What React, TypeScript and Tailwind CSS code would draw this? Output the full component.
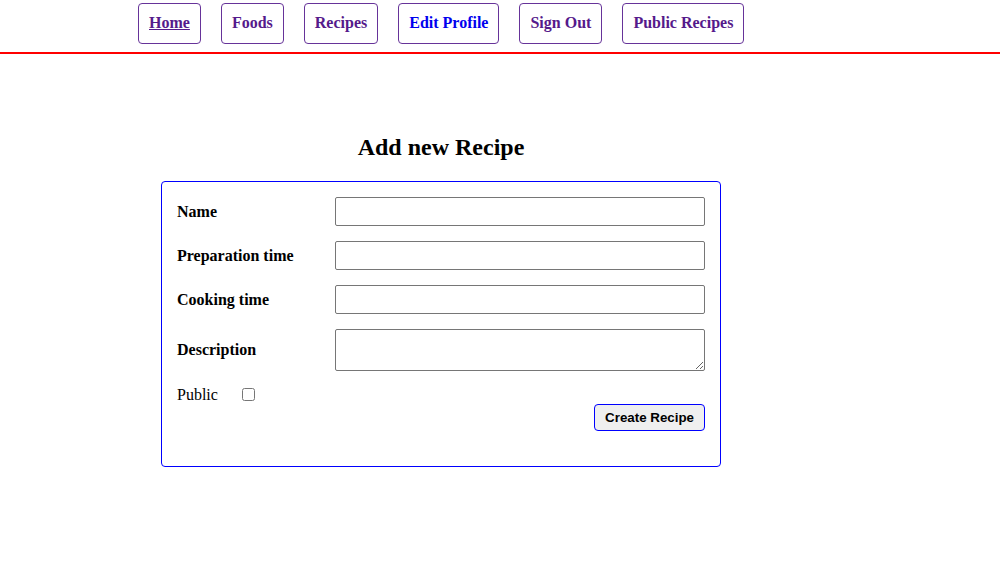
import React from 'react';

const links = [
  { label: 'Home', active: true, color: 'text-[#551a8b]' },
  { label: 'Foods', active: false, color: 'text-[#551a8b]' },
  { label: 'Recipes', active: false, color: 'text-[#551a8b]' },
  { label: 'Edit Profile', active: false, color: 'text-[#0000ee]' },
  { label: 'Sign Out', active: false, color: 'text-[#551a8b]' },
  { label: 'Public Recipes', active: false, color: 'text-[#551a8b]' },
];

const fields = [
  { label: 'Name', textarea: false },
  { label: 'Preparation time', textarea: false },
  { label: 'Cooking time', textarea: false },
  { label: 'Description', textarea: true },
];

export default function App() {
  return (
    <div className="min-h-[582px] bg-white text-black font-['Liberation_Serif',serif] text-[16px]">
      {/* nav */}
      <nav className="border-b-2 border-[#ff0000] pt-[3px] pb-[8px]">
        <ul className="flex gap-[20px] pl-[138px]">
          {links.map((l) => (
            <li key={l.label}>
              <a
                href="#"
                className={`flex h-[41px] items-center px-[10px] pb-[2px] border border-[#663399] rounded-[4px] font-bold ${l.color} ${l.active ? 'underline' : 'no-underline'}`}
              >
                {l.label}
              </a>
            </li>
          ))}
        </ul>
      </nav>

      <div className="ml-[161px] w-[560px]">
        <h2 className="mt-[79px] mb-[20px] text-center text-[24px] font-bold leading-[28px]">Add new Recipe</h2>

        <form className="border border-[#0000ff] rounded-[4px] px-[15px] pt-[15px] pb-[15px]" onSubmit={(e) => e.preventDefault()}>
          <div className="flex flex-col gap-[15px]">
            {fields.map((f) => (
              <div key={f.label} className="grid grid-cols-[158px_370px] items-center">
                <label className="font-bold">{f.label}</label>
                {f.textarea ? (
                  <textarea className="h-[42px] border border-[#767676] rounded-[2px] bg-white" />
                ) : (
                  <input type="text" className="h-[29px] border border-[#767676] rounded-[2px] bg-white" />
                )}
              </div>
            ))}
          </div>

          <div className="flex items-center h-[18px] mt-[15px]">
            <label className="w-[66px] leading-[18px]">Public</label>
            <input type="checkbox" className="w-[13px] h-[13px] -ml-[1px] -mt-[2px]" />
          </div>

          <div className="flex justify-end mb-[20px]">
            <button
              type="submit"
              className="font-['Liberation_Sans',Arial,sans-serif] font-bold text-[13.333px] leading-[15px] px-[10px] py-[5px] bg-[#efefef] border border-[#0000ff] rounded-[4px] text-black"
            >
              Create Recipe
            </button>
          </div>
        </form>
      </div>
    </div>
  );
}
